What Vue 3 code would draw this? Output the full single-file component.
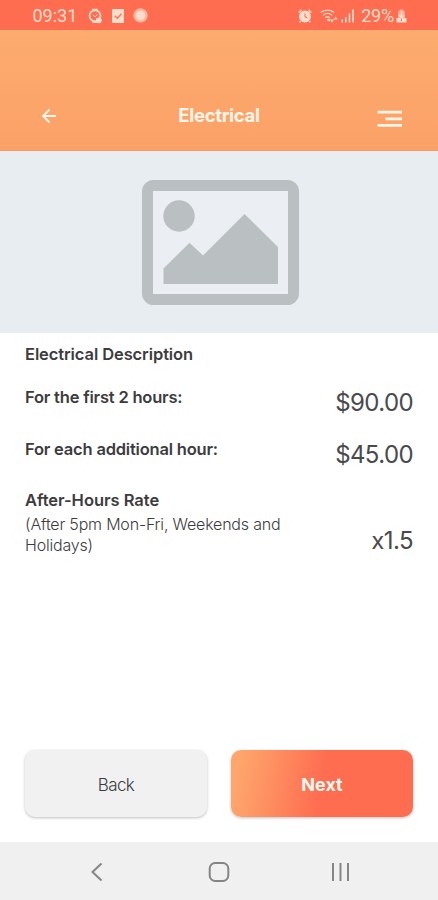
<script setup>
const rates = [
  { label: 'For the first 2 hours:', price: '$90.00' },
  { label: 'For each additional hour:', price: '$45.00' },
]
</script>

<template>
  <main class="screen">
    <div class="status">
      <span class="clock">09:31</span>
      <svg class="watch" width="14" height="16" viewBox="0 0 14 16" fill="none" stroke="currentColor">
        <path d="M4.200 1.800h5.600M4.500 14h4.500" stroke-width="2" />
        <circle cx="7" cy="7.800" r="5.500" stroke-width="1.700" />
        <path d="m4.800 6.800 2.200 2 3-2.700" stroke-width="1" />
        <circle cx="10.800" cy="12.300" r="2.900" fill="currentColor" stroke="none" />
      </svg>
      <svg class="check" width="12" height="14" viewBox="0 0 12 14">
        <rect width="12" height="14" rx="1" fill="currentColor" />
        <path d="m2.800 6.700 2.500 2.600 4.200-4.600" fill="none" stroke="#fc7556" stroke-width="1.300" />
      </svg>
      <svg class="record" width="15" height="15" viewBox="0 0 15 15">
        <circle cx="7.500" cy="7.500" r="7.200" fill="currentColor" opacity=".65" />
        <circle cx="7.500" cy="7.500" r="4.800" fill="currentColor" />
      </svg>
      <svg class="alarm" width="14" height="14" viewBox="0 0 14 14">
        <path d="M.7 3.500 3.500.8M13.300 3.500 10.500.8M2.700 12.100 1.600 13.500M11.300 12.100l1.100 1.400" stroke="currentColor" stroke-width="1.500" />
        <circle cx="7" cy="7.400" r="6" fill="currentColor" />
        <path d="M7 4.400v3.200l2.300 1.300" fill="none" stroke="#fc7556" stroke-width="1.100" />
      </svg>
      <svg class="wifi" width="18" height="14" viewBox="0 0 18 14" fill="none" stroke="currentColor" stroke-width="1.200">
        <path d="M.8 3.500C4.500.2 10.500.2 14.200 3.500M3 6.200c2.800-2.400 6.300-2.400 9.100 0M5.200 8.800c1.500-1.200 3.300-1.200 4.800 0" />
        <path d="m6.500 11 2.500-1.500 1.500 1.500-1 1.500z" fill="currentColor" stroke="none" />
        <path d="M10.200 10.500h3.800l-1.900 3zM13.800 10.500h3.800l-1.900-3z" fill="currentColor" stroke="none" />
      </svg>
      <svg class="signal" width="14" height="14" viewBox="0 0 14 14" fill="currentColor">
        <path d="M.5 10.500H2V13.500H.5zM4 8h1.600v5.500H4zM7.700 4.500h1.600v9H7.700zM11.300.5H13v13h-1.700z" />
      </svg>
      <span class="percent">29%</span>
      <svg class="battery" width="11" height="14" viewBox="0 0 11 14">
        <path d="M3.500.5h4V2H9v7H2V2h1.500z" fill="currentColor" opacity=".55" />
        <path d="M.5 9h10v4.500H.5z" fill="currentColor" />
        <path d="M5.500 1.500V9M3 6l2.500 3L8 6" fill="none" stroke="currentColor" stroke-width="1.500" />
        <path d="M5.500 9.500V12" stroke="#fc7556" stroke-width="1" />
      </svg>
    </div>

    <header class="header">
      <svg class="arrow" width="16" height="16" viewBox="0 0 16 16" fill="none" stroke="currentColor" stroke-width="1.900">
        <path d="M15 8H2M8.500 1.500 2 8l6.500 6.500" />
      </svg>
      <h1>Electrical</h1>
      <svg class="menu" width="26" height="18" viewBox="0 0 26 18" fill="currentColor">
        <path d="M.5.800h24.500v2.700H.5zM8.500 7.500h16.500v2.700H8.500zM.5 14.100h24.500v2.700H.5z" />
      </svg>
    </header>

    <div class="hero">
      <svg width="158" height="126" viewBox="0 0 158 126">
        <rect x="5.500" y="5.500" width="146" height="114" rx="6" fill="#ebeff3" stroke="#babfc2" stroke-width="11" />
        <g fill="#babfc2">
          <circle cx="37" cy="36" r="15.700" />
          <path d="M21.500 88.500 47.500 62.700 61 75.500 102.500 34 136 67V104H21.500z" />
        </g>
      </svg>
    </div>

    <section class="details">
      <h2>Electrical Description</h2>
      <div v-for="rate in rates" :key="rate.label" class="rate">
        <h3>{{ rate.label }}</h3>
        <span class="price">{{ rate.price }}</span>
      </div>
      <div class="after">
        <div>
          <h3 class="after-title">After-Hours Rate</h3>
          <p>(After 5pm Mon-Fri, Weekends and<br />Holidays)</p>
        </div>
        <span class="price">x1.5</span>
      </div>
    </section>

    <div class="actions">
      <button class="back">Back</button>
      <button class="next">Next</button>
    </div>

    <nav class="navbar">
      <svg width="14" height="20" viewBox="0 0 14 20"><path d="M11.500 1.500 2.500 10l9 8.500" /></svg>
      <svg width="22" height="20" viewBox="0 0 22 20"><rect x="1.700" y="1" width="18.600" height="18" rx="5.500" /></svg>
      <svg width="20" height="20" viewBox="0 0 20 20"><path d="M2 1v18M9.500 1v18M17 1v18" /></svg>
    </nav>
  </main>
</template>

<style>
body { background: #fff; }
</style>

<style scoped>
.screen {
  width: 438px;
  height: 900px;
  display: flex;
  flex-direction: column;
  overflow: hidden;
  background: #fff;
  color: #3c3c3e;
  font-family: Inter, "Liberation Sans", sans-serif;
}
h1, h2, h3, p { margin: 0; }
svg { display: block; flex: none; }
.status {
  height: 30px;
  box-sizing: border-box;
  padding: 1px 31px 0 32.5px;
  display: flex;
  align-items: center;
  background: #fe6d50;
  color: #ffdccb;
  font-family: Roboto, sans-serif;
  font-size: 18px;
}
.clock { width: 55.5px; }
.check { margin-left: 10px; }
.record { margin-left: 9px; }
.alarm { margin-left: auto; }
.wifi { margin-left: 8px; }
.signal { margin-left: 3px; }
.percent { margin-left: 6px; letter-spacing: -0.2px; }
.battery { margin-left: 2px; }
.header {
  height: 121px;
  box-sizing: border-box;
  padding: 53px 35px 0 41px;
  display: flex;
  justify-content: space-between;
  align-items: flex-start;
  background: linear-gradient(#fdab6e, #fba168);
  border-bottom: 1px solid #fd9661;
  color: #fff5e8;
}
.arrow { margin-top: 25px; }
h1 { font-size: 18.5px; line-height: 24px; font-weight: 700; letter-spacing: -0.3px; margin: 20px 0 0 4px; }
.menu { margin-top: 27px; }
.hero {
  height: 182px;
  box-sizing: border-box;
  padding: 29px 0 0 142px;
  background: #e8edf1;
}
.details { padding: 11px 25px 0; flex: 1; }
h2, h3 { font-size: 16.5px; line-height: 20px; font-weight: 600; letter-spacing: -0.2px; }
h2 { margin-bottom: 23px; letter-spacing: -0.1px; }
.rate {
  display: flex;
  justify-content: space-between;
  align-items: flex-start;
  height: 52px;
}
.after-title { letter-spacing: -0.02px; margin-top: -1px; }
.price { color: #4a4a4c; font-size: 24px; line-height: 31px; font-weight: 400; letter-spacing: -0.6px; }
.after { display: flex; justify-content: space-between; align-items: flex-end; }
.after .price { line-height: 30px; }
p { font-size: 16px; line-height: 21px; font-weight: 300; letter-spacing: -0.19px; margin-top: 4px; }
.actions { display: flex; gap: 24px; padding: 0 25px 25px; }
button {
  width: 182px;
  height: 67px;
  border: 0;
  padding: 2px 0 0;
  border-radius: 10px;
  font-family: inherit;
  font-size: 17px;
  box-shadow: 0 1px 3px rgba(0, 0, 0, 0.25);
}
.back { background: #f1f1f1; color: #3c3c3e; font-weight: 300; letter-spacing: -0.6px; }
.next { background: linear-gradient(100deg, #fea66c 5%, #fe6d50 50%); color: #fff8f3; font-size: 18px; font-weight: 700; }
.navbar {
  height: 58px;
  display: flex;
  justify-content: space-between;
  align-items: center;
  box-sizing: border-box;
  padding: 2px 87px 0 90px;
  background: #f0f0f0;
}
.navbar svg { fill: none; stroke: #858585; stroke-width: 2; }
.navbar svg:nth-child(2) { margin-left: 3px; }
</style>
